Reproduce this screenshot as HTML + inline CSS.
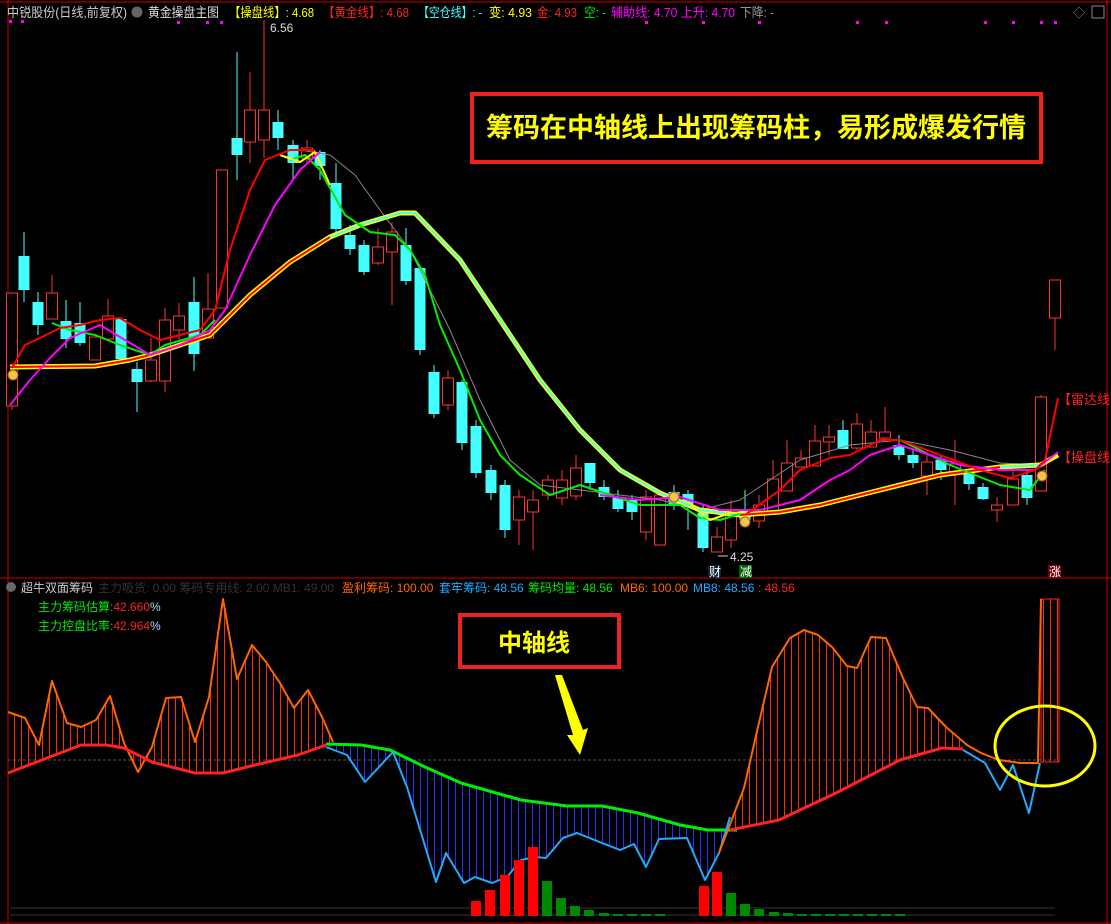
<!DOCTYPE html>
<html><head><meta charset="utf-8">
<style>
html,body{margin:0;padding:0;background:#000;width:1111px;height:924px;overflow:hidden}
svg{display:block}
text{font-family:"Liberation Sans","Noto Sans CJK SC",sans-serif}
</style></head><body>
<svg id="s" width="1111" height="924" viewBox="0 0 1111 924" xmlns="http://www.w3.org/2000/svg">
<defs>
<pattern id="pr" width="7" height="10" patternUnits="userSpaceOnUse"><rect width="1" height="10" fill="#ff2a00"/></pattern>
<pattern id="pb" width="7" height="10" patternUnits="userSpaceOnUse"><rect width="1" height="10" fill="#2233ff"/></pattern>
</defs>
<line x1="0" y1="2" x2="1111" y2="2" stroke="#c00" stroke-width="1"/>
<line x1="8" y1="0" x2="8" y2="924" stroke="#c00"/>
<line x1="1107" y1="0" x2="1107" y2="924" stroke="#c00"/>
<line x1="0" y1="578" x2="1111" y2="578" stroke="#c00"/>
<line x1="0" y1="923" x2="1111" y2="923" stroke="#c00"/>
<g id="cand"></g>
<g fill="none" stroke-linejoin="round">
<polyline stroke="#888" stroke-width="1" points="300,150 330,155 355,175 380,210 410,250 430,290 450,330 480,400 510,460 540,485 580,490 660,500 700,510 740,500 800,460 850,445 900,440 950,450 1000,463 1040,465"/>
<polyline stroke="#ff0" stroke-width="5" points="10,367 95,366 130,360 150,355 210,335 250,295 290,262 330,237 360,225 400,213 415,213 460,260 500,320 540,380 580,430 620,470 660,493 700,510 740,515 780,512 820,505 880,490 940,475 1000,467 1040,465 1058,455"/>
<polyline stroke="#f00" stroke-width="2" points="10,367 95,366 130,360 150,355 210,335 250,295 290,262 330,237"/>
<polyline stroke="#4ff" stroke-width="2" points="330,237 360,225 400,213 415,213 460,260 500,320 540,380 580,430 620,470 660,493 700,510 740,515"/>
<polyline stroke="#f00" stroke-width="2" points="740,515 780,512 820,505 880,490 940,475 1000,467"/>
<polyline stroke="#4ff" stroke-width="2" points="1000,467 1040,465"/>
<polyline stroke="#0e0" stroke-width="2" points="52,323 70,330 95,335 120,345 150,355 165,345 200,335 215,320"/>
<polyline stroke="#0e0" stroke-width="2" points="290,160 305,155 320,170 345,215 370,232 395,235 410,250 425,275 440,325 460,370 480,420 500,455 520,475 550,495 580,485 610,495 640,505 660,505 680,505 700,518 720,520 745,512"/>
<polyline stroke="#0e0" stroke-width="2" points="900,440 950,465 1000,485 1030,490 1045,470"/>
<polyline stroke="#ff0" stroke-width="2" points="280,155 300,162 315,152 330,185"/>
<polyline stroke="#ff0" stroke-width="2" points="690,505 710,520 730,513 745,512"/>
<polyline stroke="#f00" stroke-width="2" points="12,368 25,345 40,338 60,328 80,325 100,320 120,318 140,330 160,340 180,335 200,330 215,310 230,250 250,190 265,160 290,150 315,150"/>
<polyline stroke="#f0f" stroke-width="2" points="10,405 30,380 50,358 70,338 100,325 150,355 180,345 210,330 225,310 250,255 275,205 300,170 320,152"/>
<polyline stroke="#f0f" stroke-width="2" points="600,495 640,500 680,497 720,510 760,510 800,500 830,480 850,470 870,455 900,445 960,465 1000,470 1035,470 1058,452"/>
<polyline stroke="#f00" stroke-width="2" points="745,515 780,490 800,470 830,458 850,455 880,440 900,440 940,455 980,470 1010,478 1035,470 1045,460 1058,398"/>
</g>
<g fill="#f7c34a" stroke="#a06010"><circle cx="13" cy="375" r="5"/><circle cx="674" cy="497" r="5"/><circle cx="745" cy="522" r="5"/><circle cx="1042" cy="476" r="5"/></g>
<g font-size="12" fill="#ddd">
<text x="270" y="32">6.56</text><text x="730" y="561">4.25</text>
<line x1="264" y1="25" x2="264" y2="40" stroke="#f33"/>
<line x1="718" y1="556" x2="728" y2="556" stroke="#ccc"/>
</g>
<rect x="708" y="565" width="13" height="13" fill="#123"/><text x="709" y="576" font-size="12" fill="#fff">财</text>
<rect x="739" y="565" width="13" height="13" fill="#060"/><text x="740" y="576" font-size="12" fill="#fff">减</text>
<rect x="1048" y="565" width="13" height="13" fill="#700"/><text x="1049" y="576" font-size="12" fill="#fff">涨</text>
<text x="1058" y="404" font-size="13" fill="#f22">【雷达线</text>
<text x="1058" y="462" font-size="13" fill="#f22">【操盘线</text>
<g font-size="13">
<text x="7" y="17" fill="#ccc" textLength="120" lengthAdjust="spacingAndGlyphs">中锐股份(日线,前复权)</text>
<circle cx="137" cy="12" r="5.5" fill="#666"/>
<text x="148" y="17" fill="#ddd" textLength="71" lengthAdjust="spacingAndGlyphs">黄金操盘主图</text>
<text x="229" y="17" fill="#ff0" textLength="85" lengthAdjust="spacingAndGlyphs">【操盘线】: 4.68</text>
<text x="323" y="17" fill="#f22" textLength="86" lengthAdjust="spacingAndGlyphs">【黄金线】: 4.68</text>
<text x="418" y="17" fill="#4ff" textLength="64" lengthAdjust="spacingAndGlyphs">【空仓线】: -</text>
<text x="489" y="17" fill="#ff0" textLength="43" lengthAdjust="spacingAndGlyphs">变: 4.93</text>
<text x="537" y="17" fill="#f22" textLength="40" lengthAdjust="spacingAndGlyphs">金: 4.93</text>
<text x="584" y="17" fill="#0e0" textLength="22" lengthAdjust="spacingAndGlyphs">空: -</text>
<text x="611" y="17" fill="#f0f" textLength="124" lengthAdjust="spacingAndGlyphs">辅助线: 4.70 上升: 4.70</text>
<text x="740" y="17" fill="#999" textLength="34" lengthAdjust="spacingAndGlyphs">下降: -</text>
<text x="1073" y="17" fill="#888" font-size="12">◇</text>
<rect x="1092" y="6" width="12" height="12" fill="none" stroke="#888"/>
</g>
<g fill="#f0f"><rect x="9" y="20" width="3" height="3"/><rect x="21" y="20" width="3" height="3"/><rect x="177" y="21" width="3" height="3"/><rect x="206" y="21" width="3" height="3"/><rect x="220" y="21" width="3" height="3"/><rect x="645" y="21" width="3" height="3"/><rect x="702" y="21" width="3" height="3"/><rect x="758" y="21" width="3" height="3"/><rect x="856" y="21" width="3" height="3"/><rect x="885" y="21" width="3" height="3"/><rect x="984" y="21" width="3" height="3"/><rect x="1012" y="21" width="3" height="3"/><rect x="1040" y="21" width="3" height="3"/><rect x="1054" y="21" width="3" height="3"/></g>
<rect x="472" y="94" width="569" height="68" fill="#000" stroke="#e22" stroke-width="4"/>
<text x="756" y="137" font-size="27" font-weight="bold" fill="#ff0" text-anchor="middle">筹码在中轴线上出现筹码柱，易形成爆发行情</text>
<g font-size="12">
<circle cx="11" cy="587" r="5" fill="#666"/>
<text x="21" y="592" fill="#ccc">超牛双面筹码</text>
<text x="98" y="592" fill="#333">主力吸货: 0.00  筹码专用线: 2.00  MB1: 49.00</text>
<text x="342" y="592" fill="#f60">盈利筹码: 100.00</text>
<text x="439" y="592" fill="#2af">套牢筹码: 48.56</text>
<text x="528" y="592" fill="#0e0">筹码均量: 48.56</text>
<text x="620" y="592" fill="#f60">MB6: 100.00</text>
<text x="693" y="592" fill="#2af">MB8: 48.56</text>
<text x="758" y="592" fill="#f22">: 48.56</text>
<text x="38" y="611" fill="#0e0">主力筹码估算:<tspan fill="#f22">42.660</tspan><tspan fill="#adf">%</tspan></text>
<text x="38" y="630" fill="#0e0">主力控盘比率:<tspan fill="#f22">42.964</tspan><tspan fill="#adf">%</tspan></text>
</g>
<line x1="8" y1="760" x2="1060" y2="760" stroke="#555" stroke-dasharray="3,2"/>
<line x1="10" y1="908" x2="1055" y2="908" stroke="#333"/>
<line x1="10" y1="915" x2="1055" y2="915" stroke="#333"/>
<polygon fill="url(#pr)" points="8,712 25,718 39,745 52,681 67,723 81,727 96,720 110,696 124,743 138,772 152,747 166,698 181,697 195,742 209,697 223,599 237,679 252,645 266,662 280,683 294,708 308,690 322,717 333,742 326,745 298,755 255,765 223,773 195,773 152,762 124,748 106,745 81,745 42,760 8,773"/>
<polygon fill="url(#pb)" points="326,744 361,745 390,750 425,767 461,783 496,793 521,800 567,806 602,806 638,813 680,825 708,830 737,830 730,817 719,853 705,880 687,838 659,839 646,867 634,844 620,850 602,843 577,833 563,838 546,858 535,857 521,860 507,877 492,883 475,877 464,883 446,853 436,882 407,787 393,752 365,782 347,755 326,747"/>
<polygon fill="url(#pr)" points="744,788 758,727 772,667 790,638 804,630 818,635 832,647 847,666 857,668 871,637 886,638 903,678 917,707 928,708 946,727 967,745 963,749 942,748 900,760 836,793 779,820 730,830"/>
<rect x="1041" y="599" width="18" height="163" fill="url(#pr)" stroke="#f22"/>
<g fill="none" stroke-width="2" stroke-linejoin="round">
<polyline stroke="#f60" points="8,712 25,718 39,745 52,681 67,723 81,727 96,720 110,696 124,743 138,772 152,747 166,698 181,697 195,742 209,697 223,599 237,679 252,645 266,662 280,683 294,708 308,690 322,717 333,742"/>
<polyline stroke="#f22" stroke-width="3" points="8,773 42,760 81,745 106,745 124,748 152,762 195,773 223,773 255,765 298,755 326,745"/>
<polyline stroke="#0e0" stroke-width="3" points="326,744 361,745 390,750 425,767 461,783 496,793 521,800 567,806 602,806 638,813 680,825 708,830 737,830"/>
<polyline stroke="#2af" points="326,747 347,755 365,782 393,752 407,787 436,882 446,853 464,883 475,877 492,883 507,877 521,860 535,857 546,858 563,838 577,833 602,843 620,850 634,844 646,867 659,839 687,838 705,880 719,853 730,817"/>
<polyline stroke="#f60" points="719,853 744,788 758,727 772,667 790,638 804,630 818,635 832,647 847,666 857,668 871,637 886,638 903,678 917,707 928,708 946,727 967,745 981,753 999,760 1020,763 1038,763 1041,599"/>
<polyline stroke="#f22" stroke-width="3" points="730,830 779,820 836,793 900,760 942,748 963,749"/>
<polyline stroke="#2af" points="963,750 985,763 1000,790 1013,765 1029,813 1040,763"/>
</g>
<g id="bars"></g>
<rect x="460" y="615" width="159" height="52" fill="#000" stroke="#e22" stroke-width="4"/>
<text x="534" y="651" font-size="24" font-weight="bold" fill="#ff0" text-anchor="middle">中轴线</text>
<polygon points="555,675 562,675 583,730 588,728 580,755 567,735 573,735" fill="#ff0"/>
<ellipse cx="1045" cy="746" rx="50" ry="40" fill="none" stroke="#ff0" stroke-width="3"/>
</svg>
<script>
var c=[[12,'r',293,406,293,410],[24,'c',256,290,232,302],[38,'c',302,325,292,335],[52,'r',293,319,275,319],[66,'c',321,339,300,348],[80,'c',323,343,302,346],[95,'r',337,360,337,360],[108,'r',316,339,299,339],[121,'c',319,359,319,359],[137,'c',369,382,362,412],[151,'r',360,381,338,382],[165,'r',320,381,308,392],[179,'r',316,330,303,340],[194,'c',302,354,277,371],[208,'r',309,338,273,338],[222,'r',170,308,170,308],[237,'c',138,155,52,180],[250,'r',110,142,72,163],[264,'r',110,140,20,158],[278,'c',122,138,110,150],[293,'c',145,163,140,180],[307,'r',148,158,140,165],[320,'c',152,166,150,180],[336,'c',183,229,163,235],[350,'c',235,249,225,255],[364,'c',245,272,240,275],[378,'r',247,263,228,265],[392,'r',232,252,222,305],[406,'c',245,281,228,285],[420,'c',268,350,268,355],[434,'c',372,414,365,418],[448,'r',378,405,370,410],[462,'c',382,443,380,450],[476,'c',426,473,420,478],[491,'c',470,493,465,500],[505,'c',485,530,480,538],[519,'r',497,520,490,545],[533,'r',500,512,490,550],[548,'r',480,495,475,500],[562,'r',480,498,470,505],[576,'r',468,496,455,500],[590,'c',463,483,463,490],[604,'c',487,497,480,500],[618,'c',497,509,490,512],[632,'c',500,512,495,520],[646,'r',497,532,490,540],[660,'r',495,545,490,545],[674,'c',492,505,485,510],[688,'c',494,507,490,530],[703,'c',513,548,505,552],[717,'r',537,552,527,552],[731,'r',514,540,500,548],[745,'c',510,520,490,520],[759,'r',505,521,495,528],[773,'r',479,511,460,511],[787,'r',463,491,440,491],[801,'r',458,467,450,467],[815,'r',441,466,425,466],[829,'r',437,442,425,455],[843,'c',430,449,420,449],[857,'r',424,448,413,450],[871,'r',432,447,420,447],[885,'r',432,438,407,440],[899,'c',445,455,435,460],[913,'c',455,463,450,468],[927,'r',462,476,455,495],[941,'c',460,470,455,480],[955,'r',464,474,440,505],[969,'c',473,484,470,490],[983,'c',487,499,483,500],[997,'r',505,510,497,522],[1013,'r',479,505,470,505],[1027,'c',475,498,470,505],[1041,'r',397,491,395,491],[1055,'r',280,318,280,350]];
var g=document.getElementById('cand'),h='';
c.forEach(function(a){var col=a[1]=='r'?'#f33':'#4ff';h+='<line x1="'+a[0]+'" y1="'+a[4]+'" x2="'+a[0]+'" y2="'+a[5]+'" stroke="'+col+'"/>';
if(a[1]=='r')h+='<rect x="'+(a[0]-5.5)+'" y="'+a[2]+'" width="11" height="'+(a[3]-a[2])+'" fill="#000" stroke="#f33"/>';
else h+='<rect x="'+(a[0]-5.5)+'" y="'+a[2]+'" width="11" height="'+(a[3]-a[2])+'" fill="#4ff"/>';});
g.innerHTML=h;
var b=[[476,901,'#f00'],[490,890,'#f00'],[505,875,'#f00'],[519,860,'#f00'],[533,847,'#f00'],[547,881,'#080'],[561,898,'#080'],[575,906,'#080'],[589,910,'#080'],[604,913,'#080'],[618,914,'#080'],[632,914,'#080'],[646,914,'#080'],[660,914,'#080'],[704,886,'#f00'],[717,872,'#f00'],[731,893,'#080'],[745,904,'#080'],[759,909,'#080'],[774,912,'#080'],[788,913,'#080'],[802,914,'#080'],[816,914,'#080'],[830,914,'#080'],[844,914,'#080'],[858,914,'#080'],[872,914,'#080'],[886,914,'#080'],[900,914,'#080']];
var s='';b.forEach(function(a){s+='<rect x="'+(a[0]-5)+'" y="'+a[1]+'" width="10" height="'+(916-a[1])+'" fill="'+a[2]+'"/>';});
document.getElementById('bars').innerHTML=s;
</script>
</body></html>
